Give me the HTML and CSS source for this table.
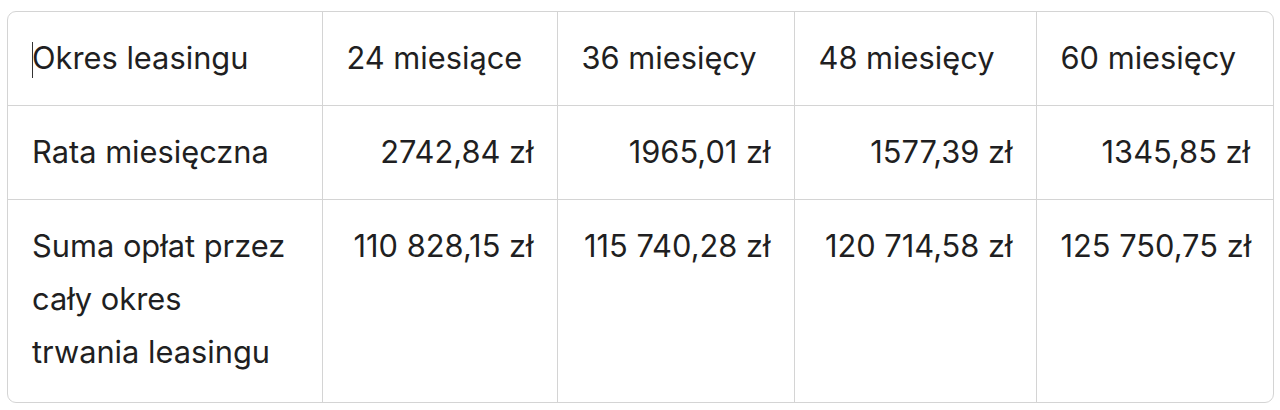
FILE: index.html
```html
<!DOCTYPE html>
<html lang="pl">
<head>
<meta charset="utf-8">
<title>Leasing</title>
<link rel="stylesheet" href="styles.css">
</head>
<body>
<div class="wrap">
<table class="lease">
<colgroup>
<col class="c1"><col class="c2"><col class="c3"><col class="c4"><col class="c5">
</colgroup>
<tr>
<td><span class="caret"></span>Okres leasingu</td>
<td>24 miesiące</td>
<td>36 miesięcy</td>
<td>48 miesięcy</td>
<td>60 miesięcy</td>
</tr>
<tr>
<td>Rata miesięczna</td>
<td class="num">2742,84 zł</td>
<td class="num">1965,01 zł</td>
<td class="num">1577,39 zł</td>
<td class="num">1345,85 zł</td>
</tr>
<tr class="tall">
<td>Suma opłat przez<br>cały okres<br>trwania leasingu</td>
<td class="num">110 828,15 zł</td>
<td class="num">115 740,28 zł</td>
<td class="num">120 714,58 zł</td>
<td class="num">125 750,75 zł</td>
</tr>
</table>
</div>
</body>
</html>
```
FILE: styles.css
```css
html, body {
  margin: 0;
  padding: 0;
  background: #ffffff;
}
body {
  padding: 11px 6px 0 7px;
  font-family: Inter, "Noto Sans", sans-serif;
  color: #1f1f22;
}
.wrap {
  width: 1265px;
  border: 1px solid #d4d4d4;
  border-radius: 9px;
  overflow: hidden;
}
.lease {
  width: 100%;
  border-collapse: collapse;
  table-layout: fixed;
  font-size: 30.8px;
  line-height: 53px;
}
.c1 { width: 314px; }
.c2 { width: 235px; }
.c3 { width: 237px; }
.c4 { width: 242px; }
.c5 { width: auto; }
.lease td {
  padding: 19px 23px 21px 24px;
  border-right: 1px solid #d4d4d4;
  border-bottom: 1px solid #d4d4d4;
  vertical-align: top;
  white-space: nowrap;
}
.lease td:last-child { border-right: none; }
.lease tr:last-child td { border-bottom: none; }
.lease tr.tall td { padding-top: 19px; padding-bottom: 24px; }
.num { text-align: right; }
.caret {
  display: inline-block;
  width: 1px;
  height: 36px;
  background: #333;
  vertical-align: -9px;
  margin-right: -1px;
}
```
